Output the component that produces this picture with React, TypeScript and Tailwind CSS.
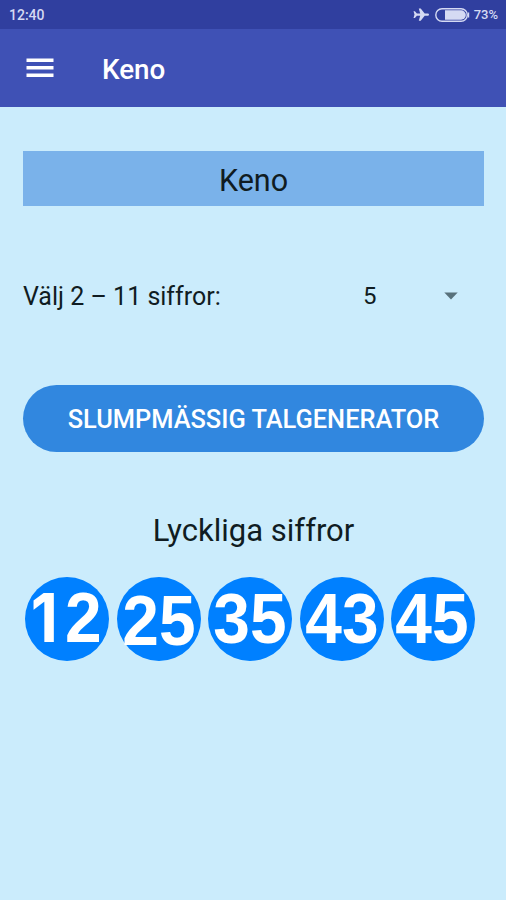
import type { ReactNode } from "react"

interface Ball {
  id: number
  digits: ReactNode
  // optical nudge of the digits inside the ball
  nudge: string
}

const balls: Ball[] = [
  {
    id: 12,
    // Inter's "1" has no foot serif
    digits: (
      <>
        <span className="inline-block w-[39px] pl-[2.500px] text-left font-['Inter',sans-serif] text-[67px] leading-none">1</span>2
      </>
    ),
    nudge: "-translate-x-[2px] -translate-y-[1px]",
  },
  { id: 25, digits: "25", nudge: "translate-y-[1.500px]" },
  { id: 35, digits: "35", nudge: "" },
  { id: 43, digits: "43", nudge: "" },
  { id: 45, digits: "45", nudge: "-translate-x-px" },
]

function StatusBar() {
  return (
    <div className="flex h-[29px] items-center justify-between bg-[#303f9f] pl-[9px] pr-[8px] font-medium text-[#d5daf3]">
      <span className="pt-px text-[14px]">12:40</span>
      <div className="flex items-center">
        <svg width="17" height="13" viewBox="0 0 17 13" className="mr-[5px]" fill="currentColor">
          <path d="M0.500 3.200h1.400l2 2.200h3.300L5.800 0.400h1.900l4 5h3.500a1.300 1.300 0 0 1 0 2.400h-3.500l-4 4.900H5.800l1.400-4.900H3.900L1.900 10H0.500l1-3.400z" />
        </svg>
        <svg width="35" height="14" viewBox="0 0 35 14" className="mr-[4px]">
          <rect x="0.800" y="0.800" width="31.500" height="12.400" rx="6.200" fill="none" stroke="currentColor" strokeWidth="1.400" />
          <path d="M10 2.300H26.100a4.700 4.700 0 0 1 0 9.400H10z" fill="currentColor" />
          <path d="M33.500 4.500v5" stroke="currentColor" strokeWidth="1.400" />
        </svg>
        <span className="pt-px text-[13px]">73%</span>
      </div>
    </div>
  )
}

function AppBar() {
  return (
    <header className="flex h-[78px] items-center bg-[#3f51b5] text-white">
      <button className="ml-[26px]" aria-label="Menu">
        <svg width="28" height="20" viewBox="0 0 28 20" fill="currentColor">
          <path d="M0.500 0.500h27v3.400h-27zM0.500 8h27v3.400h-27zM0.500 15.500h27v3.400h-27z" />
        </svg>
      </button>
      <h1 className="ml-[48px] pt-[3px] text-[27.800px] font-medium leading-none">Keno</h1>
    </header>
  )
}

export default function App() {
  return (
    <div className="h-[900px] w-[506px] overflow-hidden bg-[#cbecfc] font-['Roboto',sans-serif] text-[#101c22]">
      <StatusBar />
      <AppBar />

      <main className="px-[23px] pt-[44px]">
        <div className="mr-[-1px] flex h-[55px] items-center justify-center bg-[#7ab2ea] text-[30.500px]">
          <span className="pt-[4px]">Keno</span>
        </div>

        <div className="mt-[65px] flex h-[50px] items-center">
          <span className="w-[340px] pt-px text-[25px]">Välj 2 – 11 siffror:</span>
          <span className="w-[80.500px] text-[24px]">5</span>
          <svg width="14" height="8" viewBox="0 0 14 8" fill="#58717b">
            <path d="M0.300 0.500h13.400L7 7.500z" />
          </svg>
        </div>

        <button className="mt-[64px] flex h-[66.500px] w-[461px] items-center justify-center rounded-full bg-[#3187df] pt-[2px] text-[25.400px] font-medium text-white">
          SLUMPMÄSSIG TALGENERATOR
        </button>

        <h2 className="mr-[-1px] mt-[57.500px] text-center text-[31px] leading-[44px]">Lyckliga siffror</h2>

        <div className="ml-[2px] mt-[24px] flex gap-[7.500px]">
          {balls.map(({ id, digits, nudge }) => (
            <div
              key={id}
              className="flex size-[84px] shrink-0 items-center justify-center rounded-full bg-[#0080ff]"
            >
              <span className={`scale-x-[0.94] whitespace-nowrap font-['Liberation_Sans',sans-serif] text-[70px] font-bold leading-none text-white ${nudge}`}>
                {digits}
              </span>
            </div>
          ))}
        </div>
      </main>
    </div>
  )
}
